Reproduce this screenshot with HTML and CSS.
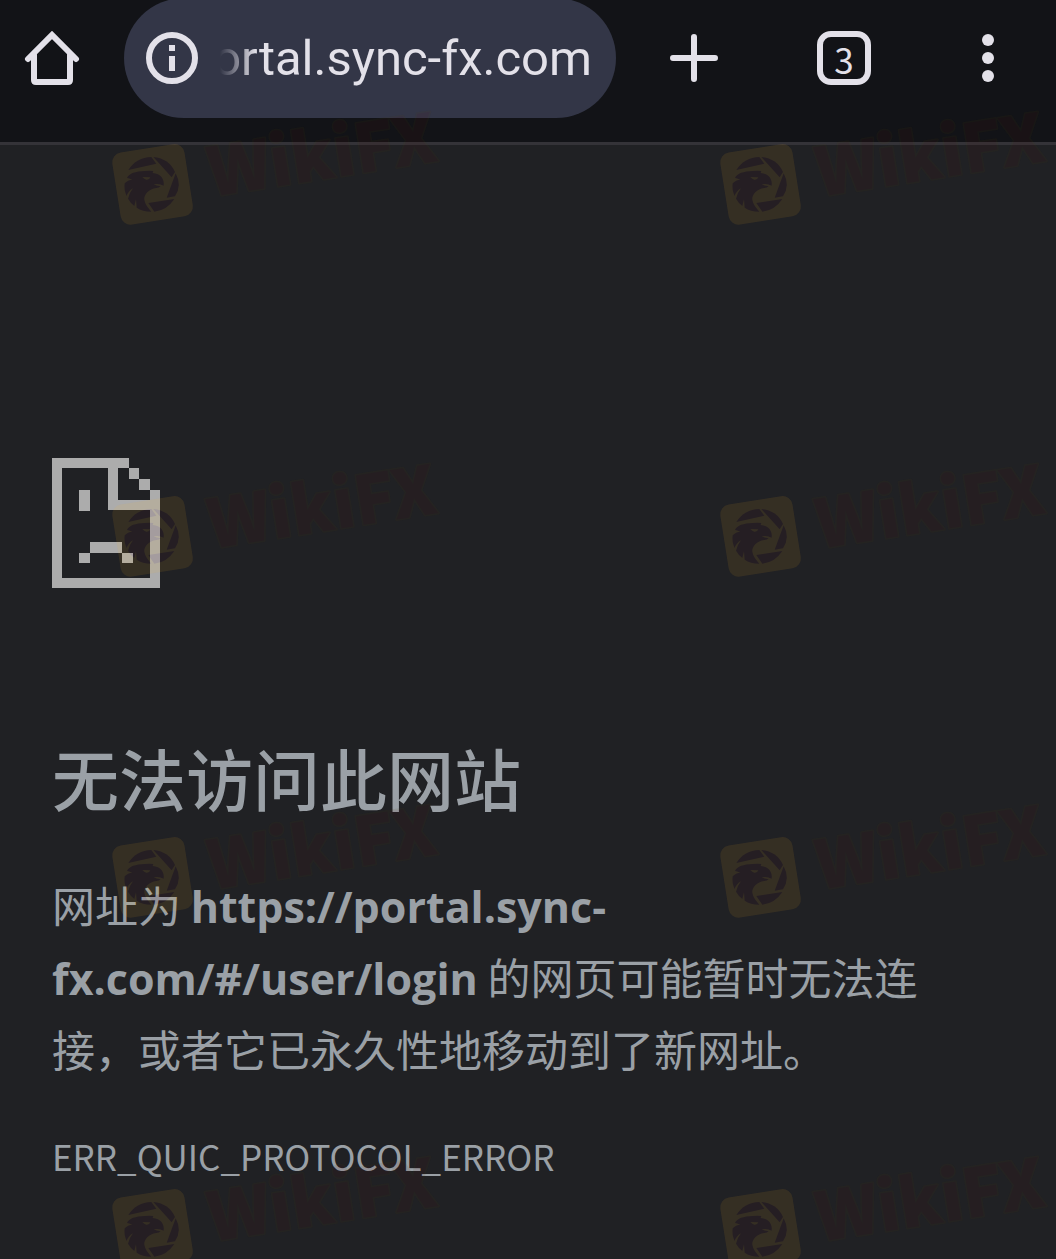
FILE: index.html
```html
<!DOCTYPE html>
<html lang="zh-CN">
<head>
    <meta charset="UTF-8">
    <meta name="viewport" content="width=device-width, initial-scale=1.0">
    <title>portal.sync-fx.com</title>
    <link rel="stylesheet" href="styles.css">
</head>
<body>
    <header class="toolbar">
        <button class="btn btn-home" type="button" aria-label="主页">
            <svg width="56" height="56" viewBox="0 0 56 56" fill="none" stroke="currentColor" stroke-width="6" stroke-linecap="round" stroke-linejoin="round">
                <path d="M4 29L28 5l24 24" stroke-linejoin="miter"/>
                <path d="M10 25v25q0 2 2 2h32q2 0 2-2V25"/>
            </svg>
        </button>
        <div class="address">
            <button class="btn btn-info" type="button" aria-label="网站信息">
                <svg width="52" height="52" viewBox="0 0 52 52">
                    <circle cx="26" cy="26" r="23" fill="none" stroke="currentColor" stroke-width="6"/>
                    <path d="M23 13h6v6h-6zM23 24h6v15h-6z" fill="currentColor"/>
                </svg>
            </button>
            <input class="url" type="text" value="portal.sync-fx.com" aria-label="网址">
        </div>
        <button class="btn btn-new" type="button" aria-label="新标签页">
            <svg width="48" height="48" viewBox="0 0 48 48" stroke="currentColor" stroke-width="6" stroke-linecap="round">
                <path d="M24 3v42M3 24h42"/>
            </svg>
        </button>
        <button class="btn btn-tabs" type="button" aria-label="标签页">
            <span class="tab-count">3</span>
        </button>
        <button class="btn btn-menu" type="button" aria-label="菜单">
            <svg width="12" height="48" viewBox="0 0 12 48" fill="currentColor">
                <circle cx="6" cy="6" r="6"/>
                <circle cx="6" cy="24" r="6"/>
                <circle cx="6" cy="42" r="6"/>
            </svg>
        </button>
    </header>

    <main class="error-page">
        <svg class="sad-page" width="108" height="130" viewBox="0 0 108 130" fill="currentColor">
            <path d="M0 0h77v10H10v110h88V52H56V10h10v32h32V32h10v98H0z"/>
            <path d="M77 10h10v11H77zM87 21h11v11H87z"/>
            <path d="M27 32h11v21H27zM38 84h32v11H38zM27 95h11v10H27zM70 95h11v10H70z"/>
        </svg>
        <h1>无法访问此网站</h1>
        <p class="summary">网址为 <strong>https://portal.sync-fx.com/#/user/login</strong> 的网页可能暂时无法连接，或者它已永久性地移动到了新网址。</p>
        <p class="error-code">ERR_QUIC_PROTOCOL_ERROR</p>
    </main>

    <!-- Watermark layer -->
    <svg class="watermark" aria-hidden="true">
        <defs>
            <g id="mark">
                <rect class="mark-badge" x="-36" y="-36" width="73" height="73" rx="10" transform="rotate(-9)"/>
                <g class="mark-dark" transform="scale(.3333) translate(-181 -258)">
                    <path d="M110 216Q134 178 179 177L194 197Z"/>
                    <path d="M185 177Q233 182 250 222L240 238Z"/>
                    <path d="M252 226Q272 262 250 295L225 299Z"/>
                    <path d="M248 303Q226 337 188 341L170 315Z"/>
                    <path d="M106 240C112 226 132 220 158 219Q174 217 185 219L183 225C207 226 219 244 216 263Q202 255 186 259Q196 265 207 264Q203 270 194 270C172 273 156 290 158 305C160 319 169 329 179 341C160 341 147 337 135 329L133 304L128 324Q117 316 109 302Q112 286 124 271Q109 280 105 294Q96 275 99 256Q108 246 122 245Q111 241 106 240Z"/>
                    <path class="mark-eye" d="M152 237L176 238Q173 246 164 245Q158 243 152 237Z"/>
                </g>
                <text class="mark-text" x="57" y="22" transform="rotate(-9)">WikiFX</text>
            </g>
        </defs>
        <g opacity=".1">
            <use href="#mark" x="152" y="184"/>
            <use href="#mark" x="760" y="184"/>
            <use href="#mark" x="152" y="536"/>
            <use href="#mark" x="760" y="536"/>
            <use href="#mark" x="152" y="877"/>
            <use href="#mark" x="760" y="877"/>
            <use href="#mark" x="152" y="1229"/>
            <use href="#mark" x="760" y="1229"/>
        </g>
    </svg>
</body>
</html>
```
FILE: styles.css
```css
* {
    margin: 0;
    padding: 0;
    box-sizing: border-box;
}

body {
    position: relative;
    min-height: 100vh;
    overflow-x: hidden;
    background: #202124;
    color: #9aa0a6;
    font-family: "Noto Sans CJK SC", "Noto Sans", sans-serif;
}

/* Toolbar */
.toolbar {
    display: flex;
    align-items: flex-start;
    height: 145px;
    background: #121317;
    border-bottom: 3px solid #343338;
    color: #e3e1e9;
}

.btn {
    display: flex;
    align-items: center;
    justify-content: center;
    flex: none;
    height: 116px;
    background: none;
    border: none;
    color: inherit;
    cursor: pointer;
}

.btn-home {
    width: 104px;
}

.btn-new {
    width: 148px;
    margin-left: 4px;
}

.btn-tabs {
    width: 152px;
}

.btn-menu {
    width: 136px;
}

.address {
    display: flex;
    align-items: center;
    flex: 1;
    min-width: 0;
    height: 120px;
    margin: -2px 0 0 20px;
    padding: 0 24px 0 22px;
    gap: 22px;
    background: #333647;
    border-radius: 60px;
}

/* rtl keeps the end of a long host name in view */
.url {
    flex: 1;
    min-width: 0;
    height: 72px;
    background: none;
    border: none;
    outline: none;
    color: inherit;
    direction: rtl;
    font-family: Roboto, sans-serif;
    font-size: 49px;
    -webkit-mask-image: linear-gradient(to right, transparent, #000 36px);
    mask-image: linear-gradient(to right, transparent, #000 36px);
}

.tab-count {
    display: flex;
    align-items: center;
    justify-content: center;
    width: 54px;
    height: 54px;
    border: 6px solid currentColor;
    border-radius: 14px;
    font-family: "Noto Sans CJK SC", sans-serif;
    font-size: 35px;
    font-weight: 400;
    line-height: 1;
}

/* Error page */
.error-page {
    padding: 313px 52px 48px;
}

.sad-page {
    display: block;
    color: #acacac;
}

h1 {
    margin-top: 140px;
    font-size: 67px;
    font-weight: 500;
    line-height: 98px;
}

.summary {
    margin-top: 42px;
    padding-right: 32px;
    font-size: 43px;
    line-height: 72px;
}

.summary strong {
    font-family: "Open Sans", sans-serif;
    font-weight: 700;
    line-height: 1;
}

.error-code {
    margin-top: 42px;
    font-size: 35px;
    line-height: 60px;
}

/* Watermark */
.watermark {
    position: absolute;
    inset: 0;
    width: 100%;
    height: 100%;
    overflow: hidden;
    pointer-events: none;
}

.mark-badge,
.mark-eye {
    fill: #ffb424;
}

.mark-dark {
    fill: #5c0d1e;
}

.mark-text {
    fill: #5c0d0a;
    stroke: #523f0d;
    stroke-width: 3px;
    stroke-linejoin: round;
    paint-order: stroke;
    font-family: "Noto Sans CJK SC", sans-serif;
    font-size: 67px;
    font-weight: 900;
}
```
